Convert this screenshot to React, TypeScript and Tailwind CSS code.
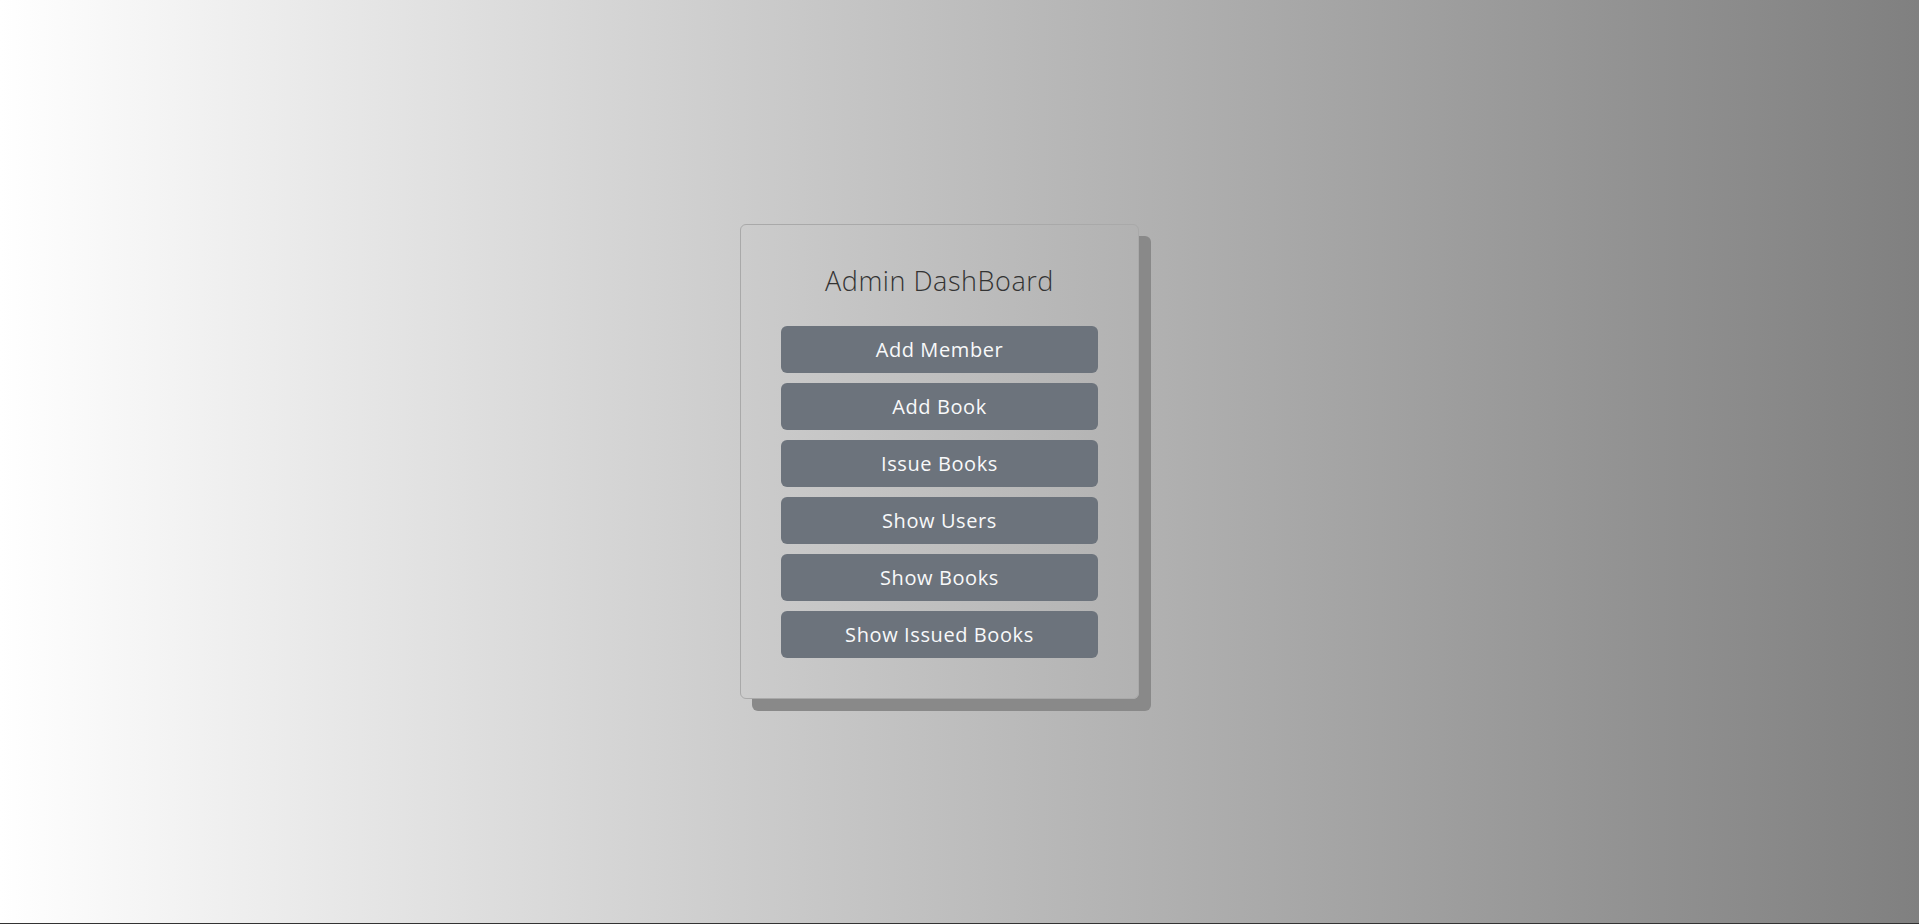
export default function App() {
  const items = [
    "Add Member",
    "Add Book",
    "Issue Books",
    "Show Users",
    "Show Books",
    "Show Issued Books",
  ];

  return (
    <div
      className="h-screen w-full flex items-center justify-center pr-[40px] border-b border-[#333333] bg-gradient-to-r from-white to-[#808080]"
      style={{ fontFamily: '"Open Sans", "Liberation Sans", sans-serif' }}
    >
      {/* Dashboard card */}
      <div className="w-[399px] rounded-md border border-[#a9a9a9] shadow-[12px_12px_0_#898989] px-10 pt-[36px] pb-[40px] flex flex-col">
        <h1 className="text-center text-[27px] leading-[39px] font-light text-[#333333] tracking-[0.02em]">
          Admin DashBoard
        </h1>
        <div className="mt-[26px] flex flex-col gap-[10px]">
          {items.map((label) => (
            <button
              key={label}
              className="h-[47px] w-full rounded-md bg-[#6c737c] text-[#f8f9fa] text-[20px] tracking-[0.03em] flex items-center justify-center"
            >
              {label}
            </button>
          ))}
        </div>
      </div>
    </div>
  );
}
